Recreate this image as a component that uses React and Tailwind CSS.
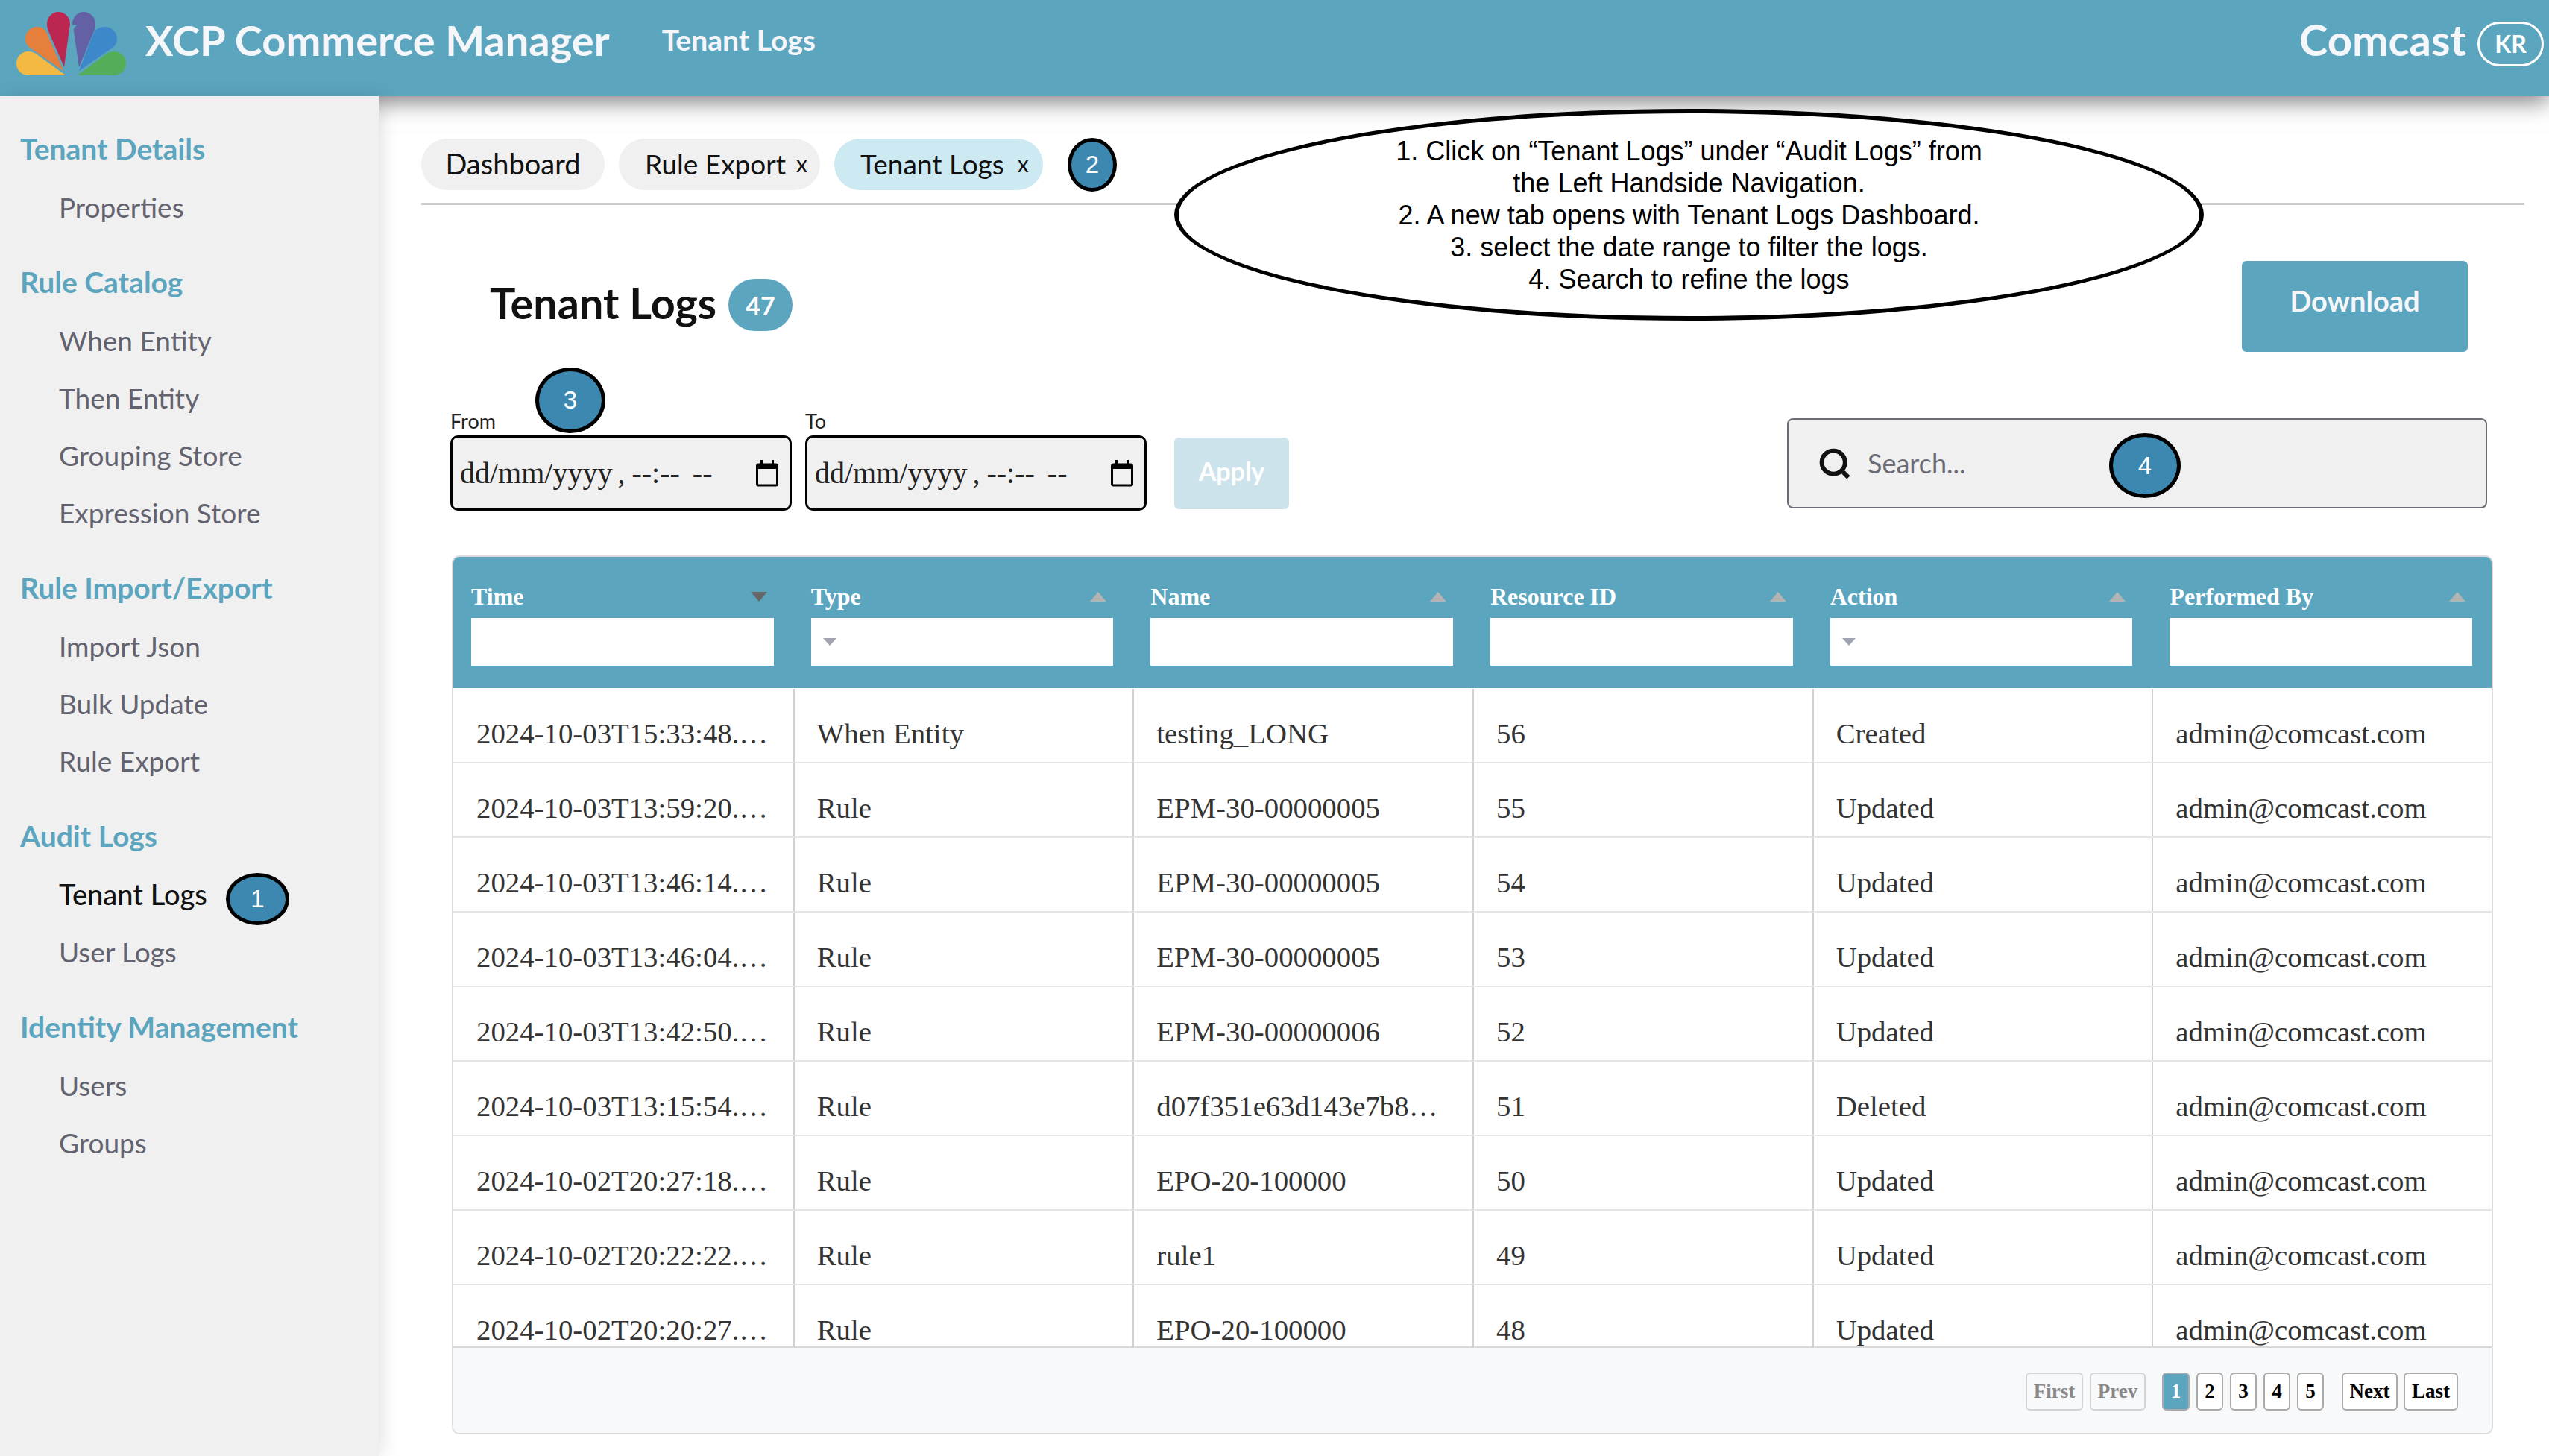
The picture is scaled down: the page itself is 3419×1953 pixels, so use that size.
import React from 'react';

const navSections = [
  { title: 'Tenant Details', items: ['Properties'] },
  { title: 'Rule Catalog', items: ['When Entity', 'Then Entity', 'Grouping Store', 'Expression Store'] },
  { title: 'Rule Import/Export', items: ['Import Json', 'Bulk Update', 'Rule Export'] },
  { title: 'Audit Logs', items: ['Tenant Logs', 'User Logs'] },
  { title: 'Identity Management', items: ['Users', 'Groups'] },
];

const columns = [
  { label: 'Time', active: true },
  { label: 'Type', select: true },
  { label: 'Name' },
  { label: 'Resource ID' },
  { label: 'Action', select: true },
  { label: 'Performed By' },
];

const rows = [
  ['2024-10-03T15:33:48.…', 'When Entity', 'testing_LONG', '56', 'Created'],
  ['2024-10-03T13:59:20.…', 'Rule', 'EPM-30-00000005', '55', 'Updated'],
  ['2024-10-03T13:46:14.…', 'Rule', 'EPM-30-00000005', '54', 'Updated'],
  ['2024-10-03T13:46:04.…', 'Rule', 'EPM-30-00000005', '53', 'Updated'],
  ['2024-10-03T13:42:50.…', 'Rule', 'EPM-30-00000006', '52', 'Updated'],
  ['2024-10-03T13:15:54.…', 'Rule', 'd07f351e63d143e7b8…', '51', 'Deleted'],
  ['2024-10-02T20:27:18.…', 'Rule', 'EPO-20-100000', '50', 'Updated'],
  ['2024-10-02T20:22:22.…', 'Rule', 'rule1', '49', 'Updated'],
  ['2024-10-02T20:20:27.…', 'Rule', 'EPO-20-100000', '48', 'Updated'],
];

function Logo() {
  return (
    <svg viewBox="0 0 170 129" className="h-[129px] w-[170px] shrink-0">
      <path fill="#f4b942" d="M88 101 L38 101 C28 101 22 93 22 85 C22 76 29 69 38 69 C42 69 45 70 48 72 Z" />
      <path fill="#e67e3c" d="M85 95 L40 64 C36 61 34 57 34 52 C34 43 41 36 50 36 C56 36 61 39 63 45 Z" />
      <path fill="#bc2751" d="M86 90 L65 42 C64 39 63 36 63 32 C63 23 70 16 78 16 C87 16 94 23 94 32 C94 34 93 37 93 39 Z" />
      <path fill="#6460a6" d="M106 90 L99 42 C98 39 99 37 104 33 L97 33 C97 23 104 16 112 16 C121 16 128 23 128 32 C128 36 127 39 126 42 Z" />
      <path fill="#3d87cb" d="M106 95 L125 46 C127 40 133 36 141 36 C150 36 157 43 157 52 C157 57 155 61 151 64 Z" />
      <path fill="#53ae5a" d="M104 101 L143 72 C146 70 149 69 153 69 C162 69 169 76 169 85 C169 94 162 101 153 101 Z" />
    </svg>
  );
}

function CalendarIcon() {
  return (
    <svg viewBox="0 0 30 36" className="h-[36px] w-[30px] shrink-0">
      <rect x="1.5" y="6" width="27" height="28" rx="2" fill="none" stroke="#000" strokeWidth="3" />
      <rect x="1.5" y="5" width="27" height="7" fill="#000" />
      <rect x="6" y="0" width="3" height="6" fill="#000" />
      <rect x="21" y="0" width="3" height="6" fill="#000" />
    </svg>
  );
}

function DateField({ label }) {
  return (
    <div className="flex flex-col">
      <label className="pb-[4px] font-['Lato',sans-serif] text-[27px] leading-[31px] text-[#222]">{label}</label>
      <div className="flex h-[101px] w-[458px] items-center justify-between rounded-[10px] border-[3px] border-black bg-[#f0f0f0] pl-[10px] pr-[15px] font-['Liberation_Serif',serif] text-[40px] text-[#222]">
        <span className="flex whitespace-pre">
          <span>dd/mm/yyyy</span>
          <span className="ml-[7px]">,</span>
          <span className="ml-[9px]">--:--</span>
          <span className="ml-[17px]">--</span>
        </span>
        <CalendarIcon />
      </div>
    </div>
  );
}

function StepBadge({ n, className }) {
  return (
    <div className={`absolute z-40 flex items-center justify-center rounded-[50%] border-[5px] border-black bg-[#3c88b0] font-['Liberation_Sans',sans-serif] text-[33px] text-white ${className}`}>
      {n}
    </div>
  );
}

function PageBtn({ children, className }) {
  return (
    <button className={`flex h-[51px] items-center justify-center rounded-[6px] border-2 font-['Liberation_Serif',serif] text-[27px] font-bold ${className}`}>
      {children}
    </button>
  );
}

function App() {
  return (
    <div className="relative flex h-screen flex-col overflow-hidden bg-white">
      {/* Header */}
      <header className="relative z-10 flex h-[129px] shrink-0 items-center bg-[#5ca5bf] pr-[7px] font-['Lato',sans-serif] text-white shadow-[0_6px_30px_rgba(0,0,0,0.55)]">
        <Logo />
        <span className="ml-[25px] pb-[22px] text-[56px] font-bold text-[#f5f6fa]">XCP Commerce Manager</span>
        <span className="ml-[70px] pb-[22px] text-[39px] font-bold text-[#f5f6fa]">Tenant Logs</span>
        <div className="ml-auto flex items-center gap-[15px] pb-[12px]">
          <span className="pb-[12px] text-[58px] font-bold text-[#f5f6fa]">Comcast</span>
          <span className="flex h-[60px] w-[89px] items-center justify-center rounded-full border-[3px] border-white text-[32px] font-bold">KR</span>
        </div>
      </header>

      <div className="flex min-h-0 flex-1">
        {/* Sidebar */}
        <aside className="relative z-20 w-[508px] shrink-0 bg-[#f0f0f0] pt-[31px] font-['Lato',sans-serif] shadow-[4px_0_24px_rgba(0,0,0,0.12)]">
          {navSections.map((section) => (
            <div key={section.title} className="mb-[23px]">
              <div className="flex h-[79px] items-center pl-[27px] text-[39px] font-bold text-[#5ca5bf]">{section.title}</div>
              {section.items.map((item) => (
                <div
                  key={item}
                  className={`flex h-[77px] items-center pl-[79px] ${item === 'Tenant Logs' ? 'text-[38px] font-medium text-[#111111]' : 'text-[37px] text-[#63636f]'}`}
                >
                  {item}
                </div>
              ))}
            </div>
          ))}
        </aside>

        {/* Main */}
        <main className="min-w-0 flex-1 pl-[57px] pr-[33px] pt-[57px]">
          {/* Tabs */}
          <div className="flex h-[89px] items-start gap-[19px] border-b-[3px] border-[#cccccc] font-['Lato',sans-serif] text-[37px] text-[#111111]">
            <div className="flex h-[69px] w-[246px] items-center justify-center rounded-full bg-[#f0f0f0] pb-[2px] text-[38px]">Dashboard</div>
            <div className="flex h-[69px] w-[270px] items-center gap-[14px] rounded-full bg-[#f0f0f0] pb-[2px] pl-[35px]">
              Rule Export <span className="text-[30px]">x</span>
            </div>
            <div className="flex h-[69px] w-[280px] items-center gap-[18px] rounded-full bg-[#cdeaf3] pb-[2px] pl-[35px]">
              Tenant Logs <span className="text-[30px]">x</span>
            </div>
          </div>

          {/* Title + download */}
          <div className="mt-[75px] flex items-start justify-between pl-[92px] pr-[76px]">
            <div className="flex h-[122px] items-center gap-[16px] pb-[4px] font-['Lato',sans-serif]">
              <h1 className="pb-[6px] text-[57.5px] font-bold text-[#111111]">Tenant Logs</h1>
              <span className="flex h-[70px] w-[86px] items-center justify-center rounded-full bg-[#5ca5bf] text-[34px] font-bold text-white">47</span>
            </div>
            <button className="h-[122px] w-[303px] rounded-[6px] bg-[#5ca5bf] pb-[16px] font-['Lato',sans-serif] text-[38px] font-bold text-[#f5f6fa]">
              Download
            </button>
          </div>

          {/* Filters */}
          <div className="mt-[77px] flex items-end pl-[39px] pr-[50px]">
            <div className="flex items-end gap-[18px]">
              <DateField label="From" />
              <DateField label="To" />
            </div>
            <button className="mb-[2px] ml-[37px] h-[96px] w-[154px] rounded-[6px] bg-[#cde3eb] pb-[8px] font-['Lato',sans-serif] text-[34px] font-bold text-white">
              Apply
            </button>
            <div className="mb-[3px] ml-auto flex h-[121px] w-[939px] items-center rounded-[8px] border-2 border-[#6b6b75] bg-[#f0f0f0] pl-[40px] font-['Lato',sans-serif] text-[36px] text-[#6b6b75]">
              <svg viewBox="0 0 24 24" className="h-[44px] w-[44px] shrink-0" fill="none" stroke="#111" strokeWidth="3.2">
                <circle cx="11" cy="11" r="8.5" />
                <path d="M17 17 L22 22" />
              </svg>
              <span className="ml-[22px] pb-[2px]">Search...</span>
            </div>
          </div>

          {/* Table */}
          <div className="mb-0 ml-[41px] mr-[42px] mt-[60px] flex h-[1179px] flex-col overflow-hidden rounded-[10px] border-2 border-[#dcdcdc] font-['Liberation_Serif',serif]">
            <div className="grid h-[176px] shrink-0 grid-cols-6 bg-[#5ca5bf] pt-[36px]">
              {columns.map((col) => (
                <div key={col.label} className="pl-[24px] pr-[26px]">
                  <div className="flex h-[46px] items-center justify-between pb-[12px] pr-[9px] text-[32px] font-bold text-white">
                    {col.label}
                    <span className={`h-0 w-0 border-x-[11px] ${col.active ? 'border-t-[13px] border-x-transparent border-t-[#666666]' : 'border-b-[13px] border-x-transparent border-b-[#b4b4b4]'}`} />
                  </div>
                  <div className="flex h-[64px] items-center bg-white pl-[16px]">
                    {col.select && <span className="h-0 w-0 border-x-[9px] border-t-[10px] border-x-transparent border-t-[#a0a3b0]" />}
                  </div>
                </div>
              ))}
            </div>
            <div className="min-h-0 flex-1 overflow-hidden pt-[1px]">
              {rows.map((row) => (
                <div key={row[0]} className="grid h-[100px] grid-cols-6 border-b-2 border-[#e5e5e5] text-[38.8px] text-[#333333]">
                  {[...row, 'admin@comcast.com'].map((cell, i) => (
                    <div key={i} className="truncate border-l-2 border-[#d0d0d0] pl-[30px] pt-[33px] leading-[54px] first:border-l-0 first:pl-[31px]">
                      {cell}
                    </div>
                  ))}
                </div>
              ))}
            </div>
            {/* Pagination */}
            <div className="flex h-[116px] shrink-0 items-start justify-end border-t-2 border-[#d8d8d8] bg-[#f8f9fa] pr-[45px] pt-[33px]">
              <PageBtn className="w-[77px] border-[#d4d4d4] text-[#888888]">First</PageBtn>
              <PageBtn className="ml-[9px] w-[75px] border-[#d4d4d4] text-[#888888]">Prev</PageBtn>
              <PageBtn className="ml-[22px] w-[37px] border-[#aaaaaa] bg-[#5ca5bf] text-white">1</PageBtn>
              {[2, 3, 4, 5].map((p) => (
                <PageBtn key={p} className="ml-[9px] w-[36px] border-[#aaaaaa] bg-white text-black">{p}</PageBtn>
              ))}
              <PageBtn className="ml-[24px] w-[75px] border-[#aaaaaa] bg-white text-black">Next</PageBtn>
              <PageBtn className="ml-[8px] w-[73px] border-[#aaaaaa] bg-white text-black">Last</PageBtn>
            </div>
          </div>
        </main>
      </div>

      {/* Annotations laid over the page */}
      <div className="absolute left-[1575px] top-[146px] z-30 flex h-[284px] w-[1381px] items-center justify-center rounded-[50%] border-[6px] border-black bg-white text-center font-['Liberation_Sans',sans-serif] text-[36px] leading-[43px] text-black">
        <p className="pt-[1px]">
          1. Click on “Tenant Logs” under “Audit Logs” from
          <br />
          the Left Handside Navigation.
          <br />
          2. A new tab opens with Tenant Logs Dashboard.
          <br />
          3. select the date range to filter the logs.
          <br />
          4. Search to refine the logs
        </p>
      </div>
      <StepBadge n="1" className="left-[303px] top-[1171px] h-[70px] w-[85px]" />
      <StepBadge n="2" className="left-[1432px] top-[185px] h-[72px] w-[66px]" />
      <StepBadge n="3" className="left-[718px] top-[493px] h-[88px] w-[94px]" />
      <StepBadge n="4" className="left-[2829px] top-[581px] h-[87px] w-[96px]" />
    </div>
  );
}

export default App;
